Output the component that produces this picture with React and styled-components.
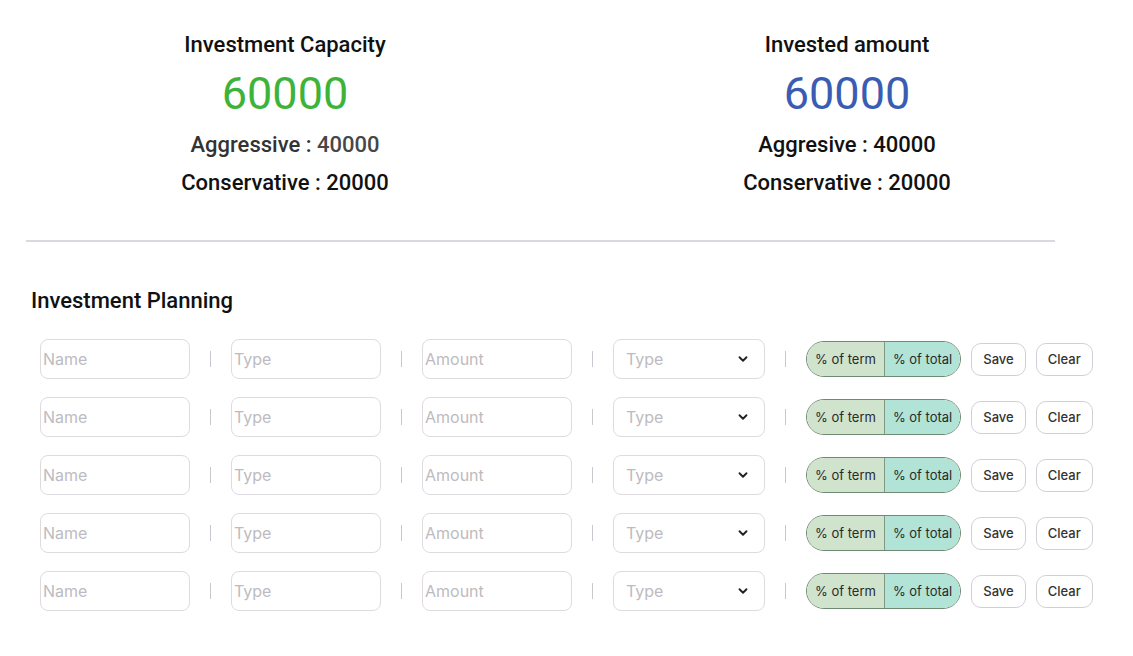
import React from "react";
import styled, { createGlobalStyle } from "styled-components";

const Global = createGlobalStyle`
  * { box-sizing: border-box; }
  body { margin: 0; background: #fff; font-family: Roboto, "Liberation Sans", sans-serif; }
`;

const Page = styled.div`
  width: 1133px;
  min-height: 656px;
`;

const Summary = styled.section`
  display: grid;
  grid-template-columns: 1fr 1fr;
  padding: 30px 5px 0 4px;
`;

const Column = styled.div`
  display: flex;
  flex-direction: column;
  align-items: center;
`;

const Title = styled.div`
  font-size: 22px;
  line-height: 30px;
  font-weight: 500;
  color: #111;
`;

const BigNumber = styled.div`
  font-size: 45px;
  line-height: 52px;
  margin: 8px 0 6px;
  color: ${(p) => p.$color};
`;

const Stat = styled.div`
  font-size: 22px;
  line-height: 38px;
  font-weight: 500;
  color: ${(p) => p.$color || "#111"};
`;

const Value = styled.span`
  color: ${(p) => p.$color || "inherit"};
`;

const Divider = styled.hr`
  border: 0;
  height: 2px;
  background: #dcd8df;
  margin: 38px 78px 0 26px;
`;

const SectionTitle = styled.h2`
  margin: 44px 0 0 31px;
  font-size: 22px;
  line-height: 30px;
  font-weight: 500;
  color: #111;
`;

const Rows = styled.div`
  display: flex;
  flex-direction: column;
  gap: 18px;
  padding: 23px 0 0 40px;
`;

const Row = styled.div`
  display: flex;
  align-items: center;
`;

const Field = styled.input`
  width: 150px;
  height: 40px;
  border: 1px solid #dedbe0;
  border-radius: 8px;
  padding: 1px 2px;
  font-family: Inter, "Liberation Sans", sans-serif;
  font-size: 16px;
  color: #333;
  background: #fff;
  outline: none;
  &::placeholder { color: #bdbbc0; }
`;

const Sep = styled.span`
  width: 1px;
  height: 16px;
  background: #cbc7cf;
  margin: 0 20px;
`;

const SelectBox = styled.div`
  width: 152px;
  height: 40px;
  border: 1px solid #dedbe0;
  border-radius: 8px;
  display: flex;
  align-items: center;
  justify-content: space-between;
  padding: 0 14px 0 12px;
  font-family: Inter, "Liberation Sans", sans-serif;
  font-size: 16px;
  color: #bdbbc0;
`;

const Toggle = styled.div`
  display: flex;
  height: 36px;
  border: 1px solid #6f8a72;
  border-radius: 18px;
  overflow: hidden;
  margin-right: 10px;
`;

const Segment = styled.button`
  border: 0;
  margin: 0;
  padding: 0 8px;
  display: flex;
  align-items: center;
  justify-content: center;
  white-space: nowrap;
  font-family: Inter, "Liberation Sans", sans-serif;
  font-size: 13px;
  color: #2a2a2a;
  background: ${(p) => (p.$first ? "#d0e3cd" : "#b1e4d7")};
  border-left: ${(p) => (p.$first ? "0" : "1px solid #7f9983")};
`;

const Btn = styled.button`
  height: 33px;
  padding: 0 11px;
  margin-right: 10px;
  border: 1px solid #d2d0d6;
  border-radius: 10px;
  background: #fff;
  font-family: Inter, "Liberation Sans", sans-serif;
  font-size: 13px;
  font-weight: 500;
  color: #333;
  white-space: nowrap;
`;

const Chevron = () => (
  <svg width="14" height="14" viewBox="0 0 24 24" fill="none" stroke="#222" strokeWidth="3.2" strokeLinecap="round" strokeLinejoin="round">
    <path d="M6 9l6 6 6-6" />
  </svg>
);

const PlanRow = () => (
  <Row>
    <Field placeholder="Name" />
    <Sep />
    <Field placeholder="Type" />
    <Sep />
    <Field placeholder="Amount" />
    <Sep />
    <SelectBox>
      <span>Type</span>
      <Chevron />
    </SelectBox>
    <Sep />
    <Toggle>
      <Segment $first>% of term</Segment>
      <Segment>% of total</Segment>
    </Toggle>
    <Btn>Save</Btn>
    <Btn>Clear</Btn>
  </Row>
);

export default function App() {
  return (
    <Page>
      <Global />
      <Summary>
        <Column>
          <Title>Investment Capacity</Title>
          <BigNumber $color="#3db33a">60000</BigNumber>
          <Stat $color="#333">
            Aggressive : <Value $color="#474747">40000</Value>
          </Stat>
          <Stat>Conservative : 20000</Stat>
        </Column>
        <Column>
          <Title>Invested amount</Title>
          <BigNumber $color="#3a5db3">60000</BigNumber>
          <Stat>Aggresive : 40000</Stat>
          <Stat>Conservative : 20000</Stat>
        </Column>
      </Summary>
      <Divider />
      <SectionTitle>Investment Planning</SectionTitle>
      <Rows>
        {[0, 1, 2, 3, 4].map((i) => (
          <PlanRow key={i} />
        ))}
      </Rows>
    </Page>
  );
}
